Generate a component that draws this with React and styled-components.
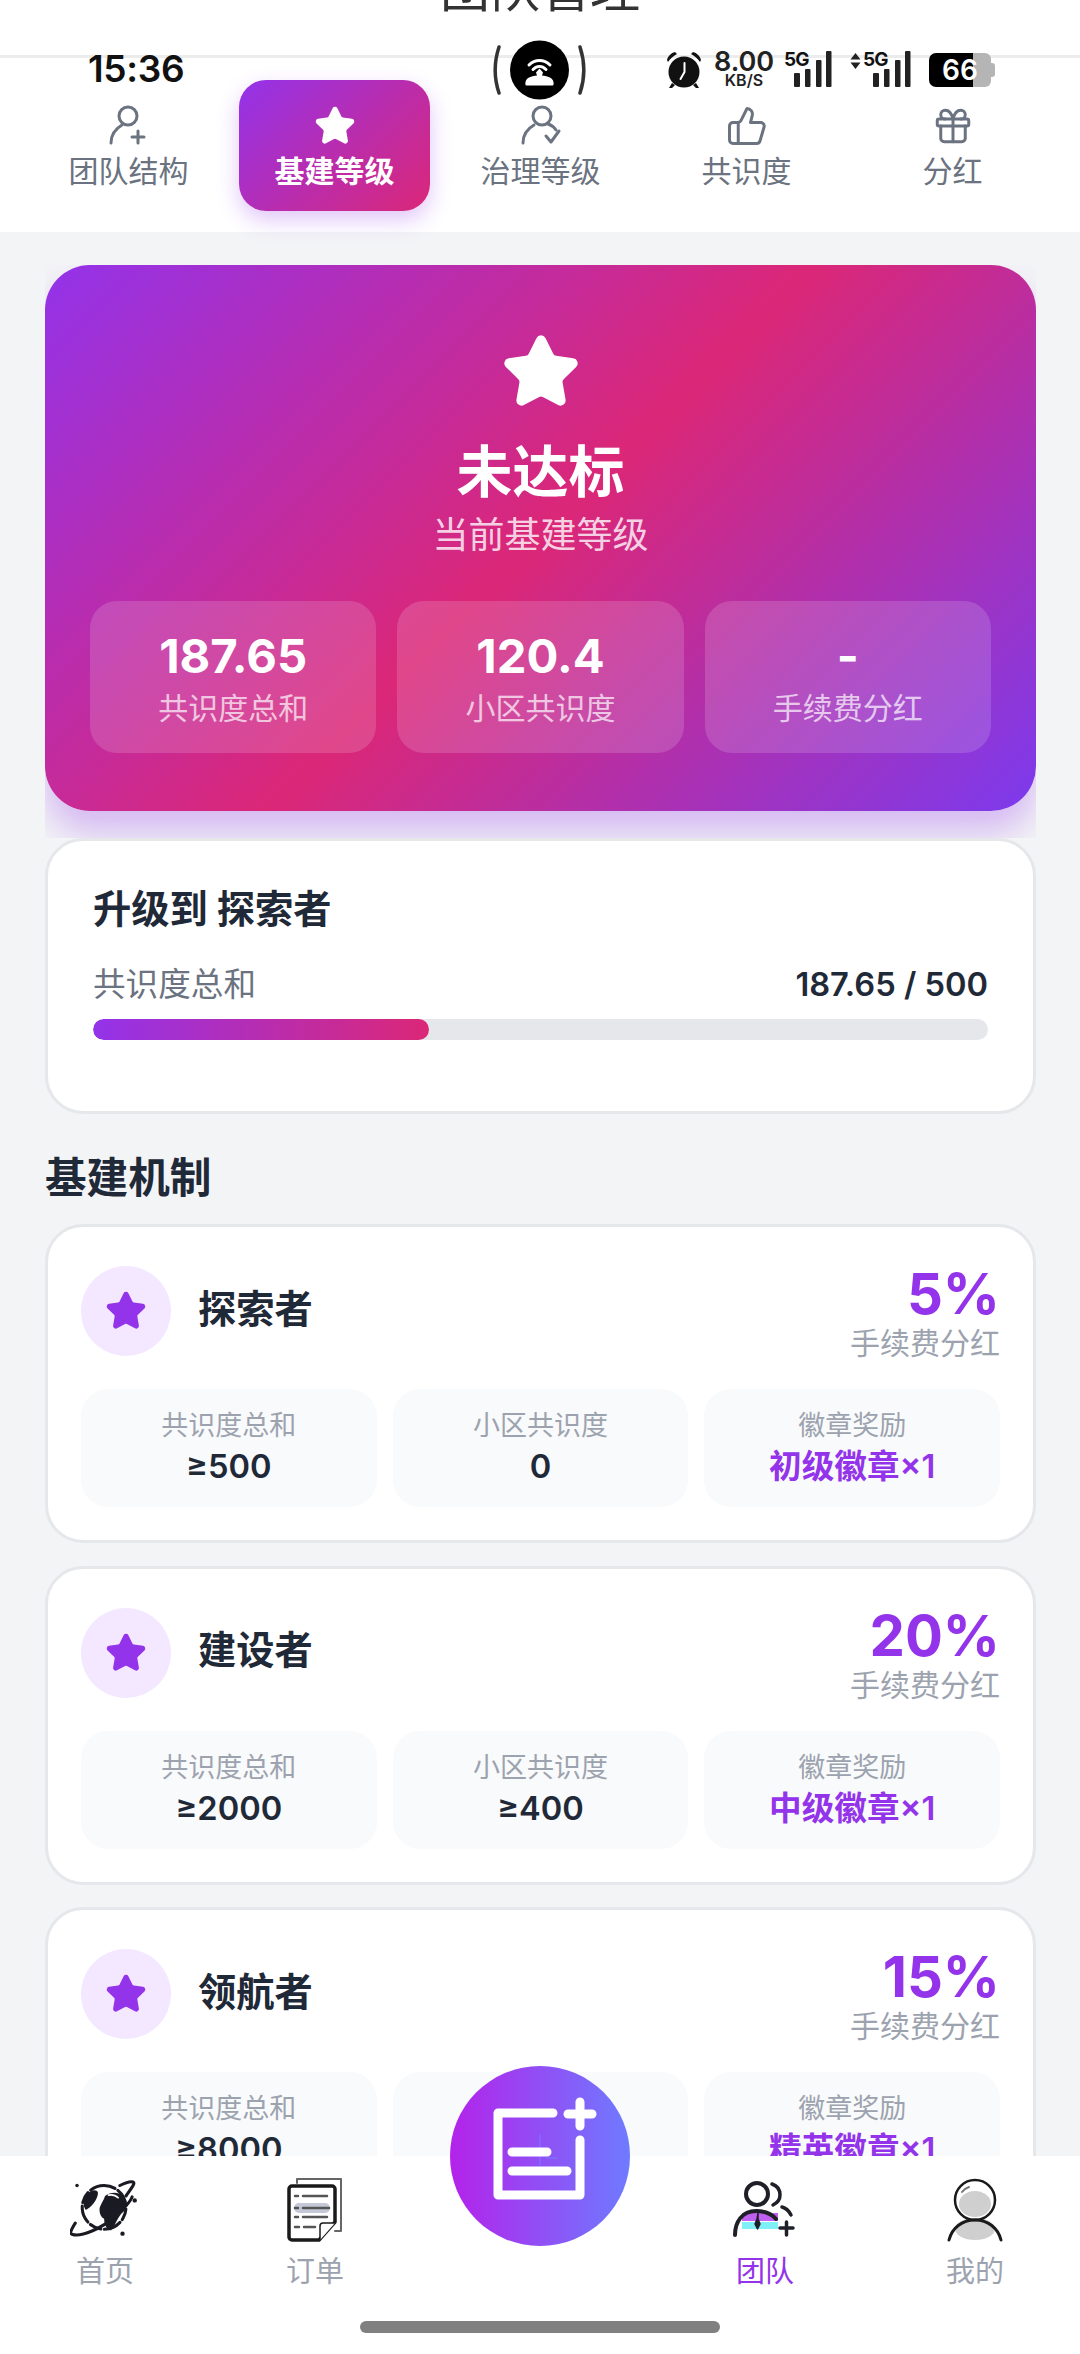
import React from "react";
import styled, { createGlobalStyle } from "styled-components";
import { Star, ThumbsUp, Gift } from "lucide-react";

const Global = createGlobalStyle`
  html, body { margin: 0; padding: 0; height: 2354px; overflow: hidden; background: #f3f4f6; }
  body { font-family: Inter, "Noto Sans CJK SC", sans-serif; color: #1f2937; }
  * { box-sizing: border-box; }
`;

const Page = styled.div`
  position: relative;
  width: 1080px;
  height: 2354px;
  overflow: hidden;
  background: #f3f4f6;
`;

/* ---------- status bar ---------- */
const StatusBar = styled.div`
  position: absolute;
  top: 40px;
  left: 0;
  right: 0;
  z-index: 5;
  height: 60px;
  display: grid;
  grid-template-columns: 1fr auto 1fr;
  align-items: start;
  padding: 0 85px 0 88px;
  color: #111;
`;
const Clock = styled.div`
  font-size: 37px;
  line-height: 44px;
  font-weight: 600;
  margin-top: 7px;
  letter-spacing: -0.3px;
`;
const Island = styled.div`
  margin-left: -2px;
  margin-right: 2px;
  display: flex;
`;
const StatusRight = styled.div`
  justify-self: end;
  display: flex;
  align-items: flex-start;
  margin-top: 11px;
`;
const Speed = styled.div`
  width: 60px;
  margin-left: 11px;
  text-align: center;
  font-weight: 600;
  color: #222;
`;
const SpeedValue = styled.div`
  font-size: 27px;
  line-height: 22px;
`;
const SpeedUnit = styled.div`
  font-size: 16px;
  line-height: 15px;
`;
const Signal = styled.div`
  position: relative;
  height: 38px;
  margin-left: ${(p) => p.$gap}px;
  width: ${(p) => p.$w}px;
`;
const SignalLabel = styled.span`
  position: absolute;
  left: ${(p) => p.$x}px;
  top: 0;
  font-size: 19px;
  line-height: 18px;
  font-weight: 700;
  letter-spacing: -1px;
`;
const Battery = styled.div`
  position: relative;
  margin-left: 18px;
  width: 66px;
  height: 34px;
  margin-top: 2px;
  display: flex;
`;
const BatteryLevel = styled.div`
  width: 44px;
  background: #000;
  border-radius: 7px 0 0 7px;
`;
const BatteryRest = styled.div`
  width: 18px;
  background: #b5b5b5;
  border-radius: 0 6px 6px 0;
`;
const BatteryNub = styled.div`
  width: 4px;
  height: 14px;
  margin-top: 10px;
  background: #b5b5b5;
  border-radius: 0 3px 3px 0;
`;
const BatteryText = styled.span`
  position: absolute;
  left: 13px;
  top: 0;
  font-size: 28px;
  line-height: 34px;
  font-weight: 600;
  color: #fff;
`;

/* ---------- header and tabs ---------- */
const Header = styled.header`
  height: 58px;
  background: #fff;
  border-bottom: 3px solid #ececec;
  display: flex;
  align-items: flex-end;
  justify-content: center;
  padding-bottom: 41px;
  overflow: hidden;
`;
const HeaderTitle = styled.div`
  font-size: 50px;
  line-height: 50px;
  color: #333;
  flex: none;
`;
const TabBar = styled.nav`
  height: 174px;
  background: #fff;
  padding: 22px 33px 0;
  display: grid;
  grid-template-columns: repeat(5, 191px);
  gap: 15px;
  align-items: start;
`;
const Tab = styled.div`
  height: 131px;
  border-radius: 27px;
  padding-top: 25px;
  display: flex;
  flex-direction: column;
  align-items: center;
  color: ${(p) => (p.$active ? "#fff" : "#6b7280")};
  background: ${(p) => (p.$active ? "linear-gradient(135deg, #9333ea, #db2777)" : "transparent")};
  box-shadow: ${(p) => (p.$active ? "0 9px 22px rgba(147, 51, 234, 0.28)" : "none")};
`;
const TabLabel = styled.div`
  margin-top: 5px;
  font-size: 30px;
  line-height: 38px;
  font-weight: ${(p) => (p.$active ? 700 : 400)};
`;

/* ---------- content ---------- */
const Content = styled.main`
  padding: 33px 44px 0 45px;
`;
const HeroClip = styled.div`
  overflow: hidden;
  padding-bottom: 27px;
`;
const Hero = styled.section`
  height: 546px;
  border-radius: 45px;
  padding: 67px 45px 0;
  display: flex;
  flex-direction: column;
  align-items: center;
  color: #fff;
  background: linear-gradient(135deg, #9333ea 0%, #db2777 50%, #7c3aed 100%);
  box-shadow: 0 22px 34px rgba(147, 51, 234, 0.3);
`;
const HeroTitle = styled.div`
  margin-top: 33px;
  font-size: 56px;
  line-height: 54px;
  font-weight: 700;
`;
const HeroSub = styled.div`
  margin-top: 14px;
  font-size: 36px;
  line-height: 44px;
  color: rgba(255, 255, 255, 0.8);
`;
const HeroStats = styled.div`
  margin-top: 44px;
  width: 100%;
  display: grid;
  grid-template-columns: repeat(3, 1fr);
  gap: 21px;
`;
const HeroStat = styled.div`
  height: 152px;
  padding-top: 28px;
  border-radius: 27px;
  background: rgba(255, 255, 255, 0.15);
  text-align: center;
`;
const HeroValue = styled.div`
  font-size: 47.25px;
  line-height: 54px;
  font-weight: 700;
`;
const HeroLabel = styled.div`
  margin-top: 5px;
  font-size: 30px;
  line-height: 40px;
  color: rgba(255, 255, 255, 0.7);
`;

const Card = styled.section`
  background: #fff;
  border: 3px solid #e5e7eb;
  border-radius: 38px;
`;
const ProgressCard = styled(Card)`
  height: 276px;
  padding: 45px 45px 0;
`;
const ProgressTitle = styled.div`
  font-size: 38.25px;
  line-height: 46px;
  font-weight: 700;
`;
const ProgressRow = styled.div`
  margin-top: 32px;
  display: flex;
  justify-content: space-between;
  font-size: 32.625px;
  line-height: 40px;
`;
const ProgressLabel = styled.span`
  color: #6b7280;
`;
const ProgressValue = styled.span`
  font-weight: 600;
`;
const Track = styled.div`
  margin-top: 15px;
  height: 21px;
  border-radius: 11px;
  background: #e5e7eb;
  overflow: hidden;
`;
const Fill = styled.div`
  height: 100%;
  border-radius: 11px;
  background: linear-gradient(90deg, #9333ea, #db2777);
`;
const SectionTitle = styled.h2`
  margin: 39px 0 21px;
  font-size: 41.625px;
  line-height: 50px;
  font-weight: 700;
`;
const LevelList = styled.div`
  display: flex;
  flex-direction: column;
  gap: 22.5px;
`;
const LevelCard = styled(Card)`
  padding: 36px 33px 33px;
`;
const LevelHead = styled.div`
  height: 100px;
  display: flex;
  align-items: flex-start;
  justify-content: space-between;
`;
const LevelName = styled.div`
  margin-top: 3px;
  display: flex;
  align-items: center;
  gap: 27px;
`;
const LevelTitle = styled.span`
  font-size: 38.25px;
  line-height: 40px;
  font-weight: 700;
  padding-bottom: 5px;
`;
const LevelIcon = styled.div`
  width: 90px;
  height: 90px;
  border-radius: 50%;
  background: #f3e8ff;
  color: #9333ea;
  display: flex;
  align-items: center;
  justify-content: center;
`;
const Rate = styled.div`
  text-align: right;
`;
const RateValue = styled.div`
  font-size: 56.25px;
  line-height: 60px;
  font-weight: 700;
  color: #9333ea;
  padding-top: 1px;
  margin-bottom: -1px;
`;
const RateLabel = styled.div`
  font-size: 30px;
  line-height: 40px;
  color: #9ca3af;
`;
const Cells = styled.div`
  margin-top: 26px;
  display: grid;
  grid-template-columns: repeat(3, 1fr);
  gap: 16px;
`;
const Cell = styled.div`
  height: 118px;
  padding-top: 19px;
  border-radius: 27px;
  background: #f9fafb;
  text-align: center;
`;
const CellLabel = styled.div`
  font-size: 27px;
  line-height: 36px;
  color: #9ca3af;
`;
const CellValue = styled.div`
  margin-top: 1px;
  font-size: 32.625px;
  line-height: 42px;
  font-weight: 600;
  color: ${(p) => (p.$accent ? "#9333ea" : "#1f2937")};
`;

/* ---------- bottom nav ---------- */
const BottomNav = styled.nav`
  position: absolute;
  left: 0;
  right: 0;
  bottom: 0;
  height: 198px;
  background: #fff;
  padding-top: 19px;
  display: flex;
  flex-direction: column;
  align-items: center;
  z-index: 3;
`;
const NavGrid = styled.div`
  width: 100%;
  display: grid;
  grid-template-columns: 210px 210px 1fr 210px 210px;
`;
const NavItem = styled.div`
  display: flex;
  flex-direction: column;
  align-items: center;
  color: ${(p) => (p.$active ? "#9333ea" : "#9ca3af")};
`;
const NavIconBox = styled.div`
  height: 70px;
  display: flex;
  align-items: center;
  justify-content: center;
`;
const NavLabel = styled.div`
  margin-top: 7px;
  font-size: 29px;
  line-height: 40px;
`;
const HomeBar = styled.div`
  margin-top: 29px;
  width: 360px;
  height: 12px;
  border-radius: 6px;
  background: #808080;
`;
const Fab = styled.div`
  position: absolute;
  left: 450px;
  top: -90px;
  width: 180px;
  height: 180px;
  border-radius: 50%;
  background: linear-gradient(90deg, #b422ea, #6e7bff);
`;

/* ---------- drawn icons ---------- */
const UserPlusIcon = () => (
  <svg width="42" height="42" viewBox="0 0 42 42" fill="none" stroke="currentColor" strokeWidth="3" strokeLinecap="round">
    <circle cx="20" cy="11" r="9" />
    <path d="M3 38c0-8 4-14 11-18" />
    <path d="M24 32h12M30 26v12" />
  </svg>
);
const UserCheckIcon = () => (
  <svg width="42" height="42" viewBox="0 0 42 42" fill="none" stroke="currentColor" strokeWidth="3" strokeLinecap="round" strokeLinejoin="round">
    <circle cx="22" cy="11" r="9" />
    <path d="M3 38c0-8 4-14 11-18" />
    <path d="M28 19c3 1 6 3 8 6" />
    <path d="M26 31l5 6 8-11" />
  </svg>
);
const IslandIcon = () => (
  <svg width="93" height="60" viewBox="0 0 93 60" fill="none">
    <path d="M6 7c-5 15-5 31 0 46M87 7c5 15 5 31 0 46" stroke="#333" strokeWidth="3.5" strokeLinecap="round" />
    <circle cx="46.5" cy="30" r="29.5" fill="#000" />
    <path d="M36 25c6-6 15-6 21 0M40 29.500c4-4 9-4 13 0" stroke="#fff" strokeWidth="3" strokeLinecap="round" />
    <path d="M46.500 28.500l3.500 4-1 3c5 .5 9 1.500 11 5 1 3 1 5-1 5h-25c-2 0-2-2-1-5 2-3.500 6-4.500 11-5l-1-3z" fill="#fff" />
  </svg>
);
const AlarmIcon = () => (
  <svg width="38" height="38" viewBox="0 0 38 38">
    <circle cx="19" cy="21" r="15.500" fill="#111" />
    <path d="M2 9c1-4 4-7 8-8l2 2C8 5 5 8 3 11zM36 9c-1-4-4-7-8-8l-2 2c4 2 7 5 9 8z" fill="#111" />
    <path d="M7 32l-3 5h3l3-3zM31 32l3 5h-3l-3-3z" fill="#111" />
    <path d="M19.500 12v9l-4 7" stroke="#fff" strokeWidth="2" fill="none" strokeLinecap="round" />
  </svg>
);
const Bars = () => (
  <svg width="38" height="36" viewBox="0 0 38 36" style={{ position: "absolute", right: 0, top: 0 }}>
    <rect x="0" y="22" width="6" height="14" rx="1" fill="#222" />
    <rect x="11" y="18" width="5.500" height="18" rx="1" fill="#222" />
    <rect x="22" y="9" width="5.500" height="27" rx="1" fill="#222" />
    <rect x="32" y="0" width="5.500" height="36" rx="1" fill="#222" />
  </svg>
);
const Updown = () => (
  <svg width="11" height="16" viewBox="0 0 11 16" style={{ position: "absolute", left: 0, top: 2 }}>
    <path d="M5.500 0l5 6.500H.5zM5.500 16l5-6.500H.5z" fill="#222" />
  </svg>
);
const FabIcon = () => (
  <svg width="180" height="180" viewBox="0 0 180 180" fill="none" stroke="#fff" strokeWidth="9" strokeLinecap="round" strokeLinejoin="round">
    <path d="M90 69v30M97 92h10" stroke="#7a74ff" strokeWidth="2" opacity="0.6" />
    <path d="M103 47H48v82h82V74" />
    <path d="M62 86h35M62 105h55" />
    <path d="M130 36v24M118 48h24" />
  </svg>
);
const GlobeIcon = () => (
  <svg width="70" height="62" viewBox="0 0 80 70" fill="none" stroke="#1a1a22" strokeLinecap="round">
    <path d="M39 7a25 25 0 1 1-.1 0" strokeWidth="3.500" strokeDasharray="13 4 20 4" />
    <path d="M64 19c7-10 11-15 8-16-3-1-9 1-15 4M6 50c-5 8-7 12-3 13 10 3 33-7 48-20 10-9 18-17 20-23" strokeWidth="3.500" />
    <path d="M40 19c7-5 15-5 20 0 5 6 6 14 1 18-6 5-9 15-14 21-4 1-8-6-8-13-4-2-6-8-5-13 2-5 5-9 6-13z" fill="#1a1a22" stroke="none" />
    <path d="M19 17c6-5 11-6 13-2 0 8-8 17-14 20-4-6-3-13 1-18z" fill="#1a1a22" stroke="none" />
    <path d="M44 18c5-1 8 0 11 3" stroke="#fff" strokeWidth="2" />
    <circle cx="8" cy="7" r="2" fill="#1a1a22" stroke="none" />
    <circle cx="74" cy="24" r="2.500" fill="#1a1a22" stroke="none" />
    <circle cx="60" cy="62" r="2.500" fill="#1a1a22" stroke="none" />
  </svg>
);
const OrderIcon = () => (
  <svg width="60" height="68" viewBox="0 0 60 68" fill="none" strokeLinecap="round" strokeLinejoin="round">
    <path d="M12 7V3h44v52h-6" stroke="#666" strokeWidth="2" />
    <path d="M7 10h40a3 3 0 0 1 3 3v33L34 64H7a3 3 0 0 1-3-3V13a3 3 0 0 1 3-3z" fill="#fff" stroke="#1a1a1a" strokeWidth="3.500" />
    <path d="M35 64V50a3 3 0 0 1 3-3h12" stroke="#1a1a1a" strokeWidth="1.500" fill="#fff" />
    <rect x="9" y="27" width="36" height="10" rx="5" fill="#c5c8d6" />
    <path d="M18 20h24M18 32h26M18 41h24M10 32h3M10 20h3M10 41h3M10 51h4M19 51h11" stroke="#555" strokeWidth="2.500" />
  </svg>
);
const TeamIcon = () => (
  <svg width="66" height="62" viewBox="0 0 66 62" fill="none" stroke="#1f1f28" strokeLinecap="round" strokeLinejoin="round">
    <rect x="10" y="34" width="36" height="8" fill="#c060f0" stroke="none" />
    <rect x="10" y="43" width="36" height="7" fill="#7ff0f8" stroke="none" />
    <circle cx="25" cy="15" r="11" strokeWidth="4" />
    <path d="M40 5c6 2 8 6 8 11s-3 8-7 10" strokeWidth="3.500" />
    <path d="M3 56c0-13 7-24 21-24 9 0 15 2 20 8" strokeWidth="4" />
    <path d="M50 28c4 1 7 4 9 8" strokeWidth="3.500" />
    <path d="M26 34v6l2 5-2.500 5-2.500-5 2-5z" fill="#1f1f28" strokeWidth="1.500" />
    <path d="M48 49h13M54.500 43v13" strokeWidth="3.500" />
  </svg>
);
const MeIcon = () => (
  <svg width="58" height="66" viewBox="0 0 58 66" fill="none" stroke="#1a1a1a" strokeLinecap="round">
    <ellipse cx="29" cy="27" rx="16" ry="13" fill="#cfcfcf" stroke="none" />
    <ellipse cx="29" cy="52" rx="20" ry="11" fill="#cfcfcf" stroke="none" />
    <circle cx="29" cy="23" r="20" strokeWidth="2.500" />
    <path d="M3 63c3-12 13-20 26-20s23 8 26 20" strokeWidth="3" />
    <path d="M16 15c2-3 4-4 7-5" strokeWidth="2" stroke="#777" />
  </svg>
);

/* ---------- data ---------- */
const tabs = [
  { label: "团队结构", icon: <UserPlusIcon /> },
  { label: "基建等级", icon: <Star size={42} fill="currentColor" strokeWidth={2} />, active: true },
  { label: "治理等级", icon: <UserCheckIcon /> },
  { label: "共识度", icon: <ThumbsUp size={42} strokeWidth={1.7} /> },
  { label: "分红", icon: <Gift size={42} strokeWidth={1.7} /> },
];
const heroStats = [
  ["187.65", "共识度总和"],
  ["120.4", "小区共识度"],
  ["-", "手续费分红"],
];
const levels = [
  { name: "探索者", rate: "5%", total: "≥500", area: "0", badge: "初级徽章×1" },
  { name: "建设者", rate: "20%", total: "≥2000", area: "≥400", badge: "中级徽章×1" },
  { name: "领航者", rate: "15%", total: "≥8000", area: "≥1600", badge: "精英徽章×1" },
];

export default function App() {
  return (
    <Page>
      <Global />
      <StatusBar>
        <Clock>15:36</Clock>
        <Island>
          <IslandIcon />
        </Island>
        <StatusRight>
          <AlarmIcon />
          <Speed>
            <SpeedValue>8.00</SpeedValue>
            <SpeedUnit>KB/S</SpeedUnit>
          </Speed>
          <Signal $gap={10} $w={48}>
            <SignalLabel $x={0}>5G</SignalLabel>
            <Bars />
          </Signal>
          <Signal $gap={18} $w={61}>
            <Updown />
            <SignalLabel $x={13}>5G</SignalLabel>
            <Bars />
          </Signal>
          <Battery>
            <BatteryLevel />
            <BatteryRest />
            <BatteryNub />
            <BatteryText>66</BatteryText>
          </Battery>
        </StatusRight>
      </StatusBar>

      <Header>
        <HeaderTitle>团队管理</HeaderTitle>
      </Header>
      <TabBar>
        {tabs.map((t) => (
          <Tab key={t.label} $active={t.active}>
            {t.icon}
            <TabLabel $active={t.active}>{t.label}</TabLabel>
          </Tab>
        ))}
      </TabBar>

      <Content>
        <HeroClip>
          <Hero>
            <Star size={80} fill="#fff" color="#fff" strokeWidth={2} />
            <HeroTitle>未达标</HeroTitle>
            <HeroSub>当前基建等级</HeroSub>
            <HeroStats>
              {heroStats.map(([value, label]) => (
                <HeroStat key={label}>
                  <HeroValue>{value}</HeroValue>
                  <HeroLabel>{label}</HeroLabel>
                </HeroStat>
              ))}
            </HeroStats>
          </Hero>
        </HeroClip>

        <ProgressCard>
          <ProgressTitle>升级到 探索者</ProgressTitle>
          <ProgressRow>
            <ProgressLabel>共识度总和</ProgressLabel>
            <ProgressValue>187.65 / 500</ProgressValue>
          </ProgressRow>
          <Track>
            <Fill style={{ width: `${(187.65 / 500) * 100}%` }} />
          </Track>
        </ProgressCard>

        <SectionTitle>基建机制</SectionTitle>
        <LevelList>
          {levels.map((l) => (
            <LevelCard key={l.name}>
              <LevelHead>
                <LevelName>
                  <LevelIcon>
                    <Star size={42} fill="currentColor" strokeWidth={2} />
                  </LevelIcon>
                  <LevelTitle>{l.name}</LevelTitle>
                </LevelName>
                <Rate>
                  <RateValue>{l.rate}</RateValue>
                  <RateLabel>手续费分红</RateLabel>
                </Rate>
              </LevelHead>
              <Cells>
                <Cell>
                  <CellLabel>共识度总和</CellLabel>
                  <CellValue>{l.total}</CellValue>
                </Cell>
                <Cell>
                  <CellLabel>小区共识度</CellLabel>
                  <CellValue>{l.area}</CellValue>
                </Cell>
                <Cell>
                  <CellLabel>徽章奖励</CellLabel>
                  <CellValue $accent>{l.badge}</CellValue>
                </Cell>
              </Cells>
            </LevelCard>
          ))}
        </LevelList>
      </Content>

      <BottomNav>
        <Fab>
          <FabIcon />
        </Fab>
        <NavGrid>
          <NavItem>
            <NavIconBox><GlobeIcon /></NavIconBox>
            <NavLabel>首页</NavLabel>
          </NavItem>
          <NavItem>
            <NavIconBox><OrderIcon /></NavIconBox>
            <NavLabel>订单</NavLabel>
          </NavItem>
          <div />
          <NavItem $active>
            <NavIconBox><TeamIcon /></NavIconBox>
            <NavLabel>团队</NavLabel>
          </NavItem>
          <NavItem>
            <NavIconBox><MeIcon /></NavIconBox>
            <NavLabel>我的</NavLabel>
          </NavItem>
        </NavGrid>
        <HomeBar />
      </BottomNav>
    </Page>
  );
}
